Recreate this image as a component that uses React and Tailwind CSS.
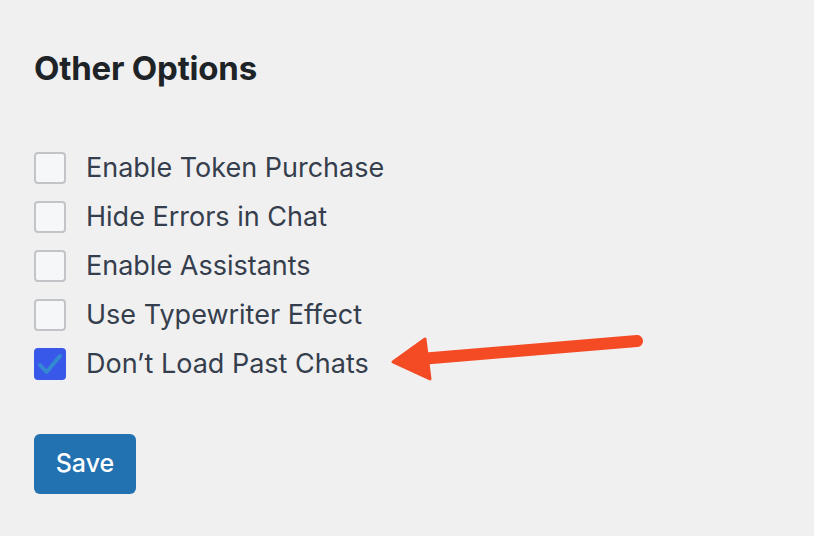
export default function App() {
  const items = [
    ["Enable Token Purchase", false],
    ["Hide Errors in Chat", false],
    ["Enable Assistants", false],
    ["Use Typewriter Effect", false],
    ["Don\u2019t Load Past Chats", true],
  ];
  return (
    <div className="relative w-[814px] h-[536px] bg-[#f0f0f1] overflow-hidden" style={{ fontFamily: "Inter, 'Noto Sans', sans-serif" }}>
      <div className="pl-[34px] pt-[48px]">
        <h2 className="text-[33px] leading-[40px] font-bold text-[#1d2327] tracking-[-0.2px]">Other Options</h2>
        <div className="mt-[64px] flex flex-col gap-[17px]">
          {items.map(([label, checked]) => (
            <div key={label} className="flex items-center h-[32px]">
              {checked ? (
                <div className="w-[32px] h-[32px] rounded-[4px] bg-[#3858e9] flex items-center justify-center">
                  <svg width="32" height="32" viewBox="0 0 32 32">
                    <path d="M6 17 L12.5 24 L26 8" fill="none" stroke="#3489d2" strokeWidth="4" strokeLinecap="round" strokeLinejoin="round" />
                  </svg>
                </div>
              ) : (
                <div className="w-[32px] h-[32px] rounded-[4px] bg-[#f6f7f9] border-2 border-[#c3c4c7]" />
              )}
              <span className="ml-[20px] text-[27px] text-[#353e4c] leading-[32px]">{label}</span>
            </div>
          ))}
        </div>
        <button className="mt-[54px] w-[102px] h-[60px] rounded-[6px] bg-[#2271b1] text-white text-[25px] font-medium">Save</button>
      </div>
      <svg className="absolute left-0 top-0" width="814" height="536" viewBox="0 0 814 536">
        <path d="M637 341 L420 359" stroke="#f44b24" strokeWidth="12" strokeLinecap="round" fill="none" />
        <path d="M393 362 L425 339 L430 379 Z" fill="#f44b24" stroke="#f44b24" strokeWidth="3" strokeLinejoin="round" />
      </svg>
    </div>
  );
}
